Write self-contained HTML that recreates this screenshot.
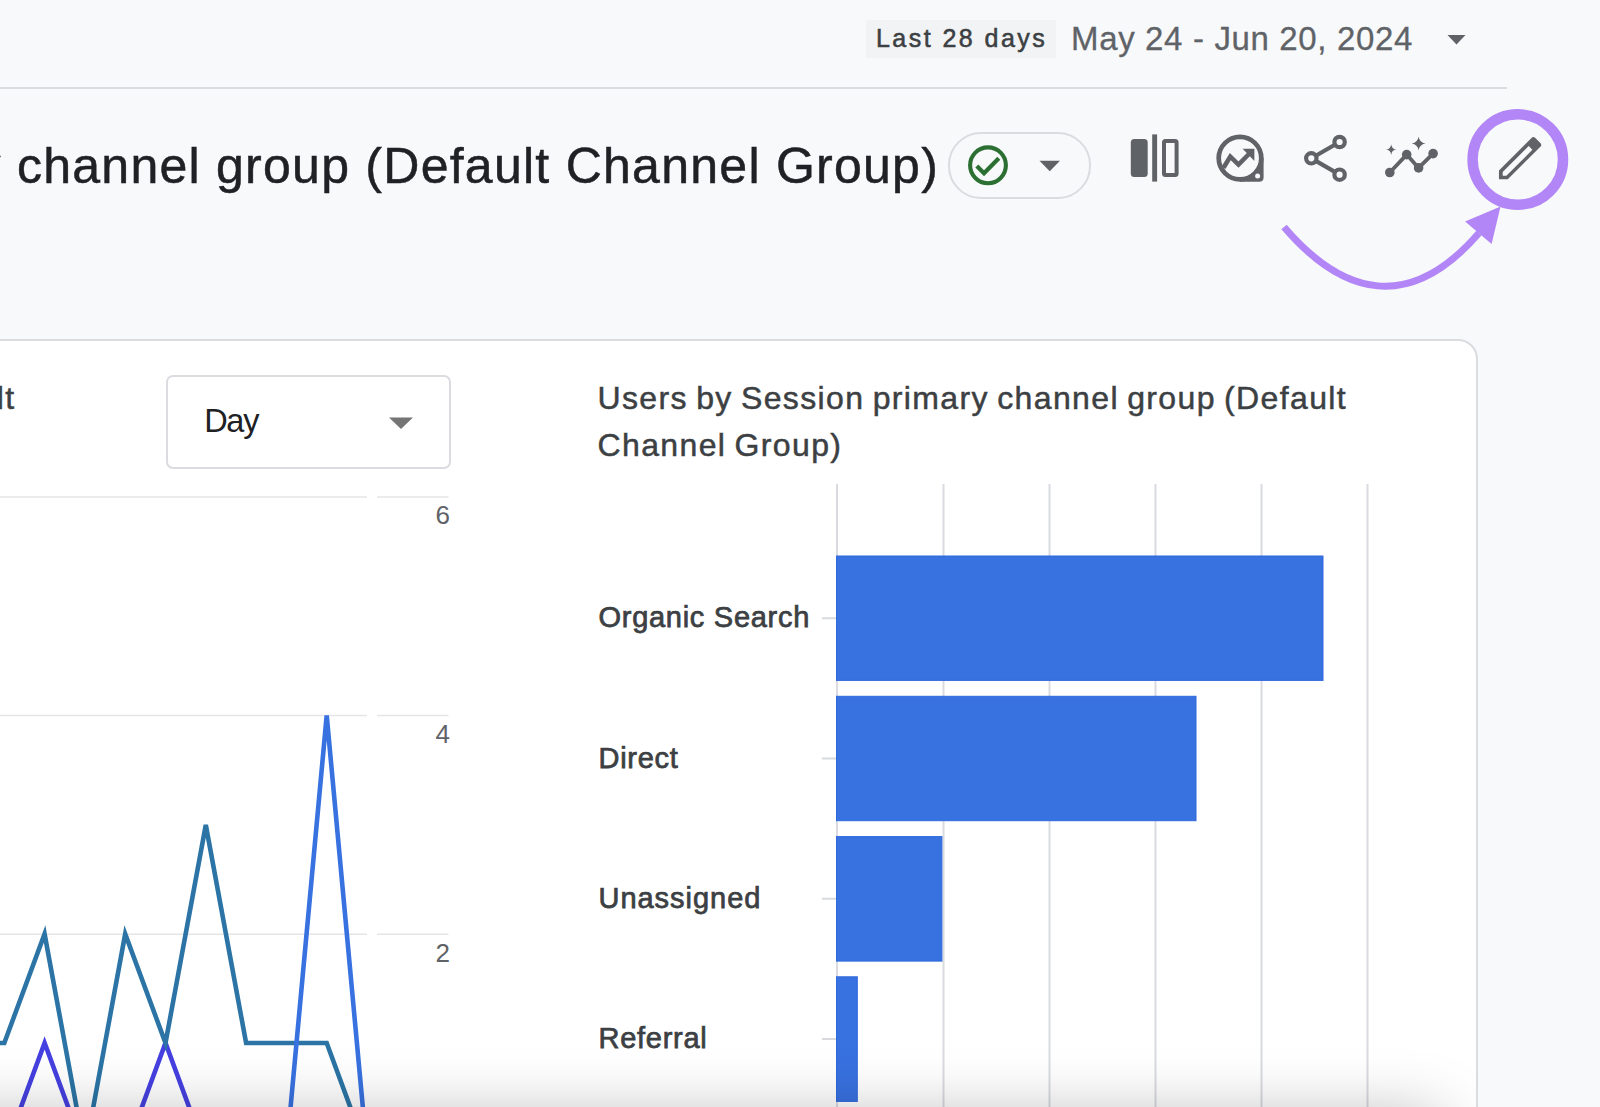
<!DOCTYPE html>
<html lang="en">
<head>
<meta charset="utf-8">
<title>Users by Session primary channel group</title>
<style>
  html, body { margin: 0; padding: 0; }
  body {
    width: 1600px; height: 1107px; overflow: hidden; position: relative;
    background: #f8f9fa;
    font-family: "Liberation Sans", sans-serif;
    color: #202124;
  }
  .abs { position: absolute; white-space: nowrap; line-height: 1; }
  /* top bar */
  #topline { position: absolute; left: 0; top: 87px; width: 1507px; height: 2px; background: #dadce0; }
  #chip28 { position: absolute; left: 866px; top: 20px; width: 190px; height: 38px; background: #f1f3f4; }
  #t28 { left: 876px; top: 26px; font-size: 25px; color: #3c4043; letter-spacing: 2.45px; -webkit-text-stroke: 0.55px #3c4043; }
  #tdate { left: 1071px; top: 21.5px; font-size: 33px; color: #5f6368; letter-spacing: 0.65px; -webkit-text-stroke: 0.3px #5f6368; }
  /* title */
  #title { left: -24.5px; top: 141px; font-size: 50px; color: #202124; letter-spacing: 1.26px; -webkit-text-stroke: 0.5px #202124; }
  #status { position: absolute; left: 948px; top: 132px; width: 138.5px; height: 62.5px; border: 2px solid #dadce0; border-radius: 33px; }
  /* card */
  #card { position: absolute; left: -30px; top: 339px; width: 1504px; height: 800px; background: #fff; border: 2px solid #dadce0; border-radius: 20px; }
  #daybox { position: absolute; left: 166px; top: 375px; width: 280.5px; height: 90px; border: 2px solid #dadce0; border-radius: 7px; background: #fff; }
  #tday { left: 204.2px; top: 405px; font-size: 32.5px; color: #202124; letter-spacing: -1.3px; }
  #tlt { right: 1584.5px; top: 374px; line-height: 48px; font-size: 32px; color: #3c4043; letter-spacing: 1.37px; -webkit-text-stroke: 0.5px #3c4043; }
  #ctitle { left: 597.5px; top: 374.5px; font-size: 32px; color: #3c4043; line-height: 47px; white-space: normal; width: 800px; letter-spacing: 1.37px; word-spacing: -2px; -webkit-text-stroke: 0.5px #3c4043; }
  .ylab { font-size: 26px; color: #5f6368; text-align: right; width: 60px; left: 390px; }
  .blab { left: 598.5px; font-size: 29px; letter-spacing: 0.72px; color: #3c4043; -webkit-text-stroke: 0.75px #3c4043; }
  #svgall { position: absolute; left: 0; top: 0; }
  #fadeclip { position: absolute; left: 0; top: 900px; width: 1476px; height: 207px; overflow: hidden; pointer-events: none; }
  #fade { position: absolute; left: -300px; top: 216px; width: 1740px; height: 300px; background: #ddd; box-shadow: 0 0 60px rgba(0,0,0,0.28); }
</style>
</head>
<body>

<div id="topline"></div>
<div id="chip28"></div>
<div class="abs" id="t28">Last 28 days</div>
<div class="abs" id="tdate">May 24 - Jun 20, 2024</div>

<div class="abs" id="title">y <span id="tt2">channel group (Default Channel Group)</span></div>
<div id="status"></div>

<div id="card"></div>
<div id="daybox"></div>
<div class="abs" id="tday">Day</div>
<div class="abs" id="tlt">Users by Session primary channel group (Default</div>
<div class="abs" id="ctitle">Users by Session primary channel group (Default Channel Group)</div>

<div class="abs ylab" style="top:502px">6</div>
<div class="abs ylab" style="top:721px">4</div>
<div class="abs ylab" style="top:940px">2</div>

<div class="abs blab" style="top:603.3px">Organic Search</div>
<div class="abs blab" style="top:744.1px">Direct</div>
<div class="abs blab" style="top:884.2px;letter-spacing:0.97px">Unassigned</div>
<div class="abs blab" style="top:1024.1px">Referral</div>

<svg id="svgall" width="1600" height="1107" viewBox="0 0 1600 1107">
  <!-- date arrow -->
  <path d="M1447.5 35 L1465.5 35 L1456.5 44.5 Z" fill="#5f6368"/>

  <!-- status chip: check + caret -->
  <circle cx="988" cy="165.3" r="17.9" fill="none" stroke="#2b7032" stroke-width="4.1"/>
  <path d="M976.8 166 L984 173.2 L998.8 158.3" fill="none" stroke="#2b7032" stroke-width="4.2"/>
  <path d="M1039.5 160.7 L1060 160.7 L1049.75 171.3 Z" fill="#5f6368"/>

  <!-- compare icon -->
  <rect x="1130.8" y="138.9" width="16.9" height="38.1" rx="3.5" fill="#5f6368"/>
  <rect x="1152.2" y="134.4" width="4.9" height="47.2" fill="#5f6368"/>
  <rect x="1164" y="140.9" width="12.6" height="34.1" rx="1.5" fill="none" stroke="#5f6368" stroke-width="4"/>

  <!-- insights icon -->
  <path d="M1240 158.1 L1263.6 158.1 L1263.6 177.3 Q1263.6 181.8 1259.1 181.8 L1240 181.8 Z" fill="#5f6368"/>
  <circle cx="1240" cy="158.1" r="21.3" fill="#f8f9fa" stroke="#5f6368" stroke-width="4.7"/>
  <path d="M1223.5 167.8 L1230.3 156.6 L1238.5 164.6 L1249 154" fill="none" stroke="#5f6368" stroke-width="4.6"/>
  <path d="M1242.6 148.8 L1254.4 148.8 L1254.4 161 Z" fill="#5f6368"/>
  <circle cx="1257.6" cy="176.1" r="2.5" fill="#f8f9fa"/>

  <!-- share icon -->
  <g fill="none" stroke="#5f6368" stroke-width="4.2">
    <circle cx="1339.6" cy="142" r="5.2"/>
    <circle cx="1311.3" cy="158.3" r="5.2"/>
    <circle cx="1339.6" cy="174.7" r="5.2"/>
    <path d="M1316.2 155.5 L1334.8 144.8 M1316.2 161.1 L1334.8 171.9"/>
  </g>

  <!-- sparkle trend icon -->
  <g fill="#5f6368">
    <circle cx="1389.8" cy="172.5" r="4.8"/>
    <circle cx="1406.7" cy="154.6" r="4.8"/>
    <circle cx="1418.6" cy="167.9" r="4.8"/>
    <circle cx="1433.1" cy="153.6" r="4.8"/>
    <path d="M1418.6 136.8 Q1419.6 142.6 1425.4 143.6 Q1419.6 144.6 1418.6 150.4 Q1417.6 144.6 1411.8 143.6 Q1417.6 142.6 1418.6 136.8 Z"/>
    <path d="M1391.2 144.2 Q1391.6 149.2 1396.6 149.6 Q1391.6 150 1391.2 155 Q1390.8 150 1385.8 149.6 Q1390.8 149.2 1391.2 144.2 Z"/>
  </g>
  <path d="M1389.8 172.5 L1406.7 154.6 L1418.6 167.9 L1433.1 153.6" fill="none" stroke="#5f6368" stroke-width="3.8" stroke-linejoin="round"/>

  <!-- pencil -->
  <g transform="translate(1491.9 130) scale(2.35)">
    <path fill="#5f6368" d="M17.66 3c-.25 0-.51.1-.7.29L3 17.25V21h3.75L20.71 7.04c.39-.39.39-1.02 0-1.41l-2.34-2.34c-.2-.2-.45-.29-.71-.29z"/>
  </g>
  <path fill="#f8f9fa" d="M1502.7 175.8 L1502.7 172.1 L1528.7 146.1 L1532.4 149.8 L1506.4 175.8 Z"/>

  <!-- purple highlight -->
  <circle cx="1517.8" cy="159.5" r="45.2" fill="none" stroke="#b286f6" stroke-width="10.5"/>
  <path d="M1284 227 C1343 296 1410 313 1479 233" fill="none" stroke="#b286f6" stroke-width="7"/>
  <path d="M1500.5 206.5 L1465.1 221.4 L1491.6 243.9 Z" fill="#b286f6"/>

  <!-- line chart gridlines -->
  <g stroke="#e5e5e5" stroke-width="1.4">
    <path d="M0 497 H367 M377 497 H448.5"/>
    <path d="M0 715.5 H367 M377 715.5 H448.5"/>
    <path d="M0 934.2 H367 M377 934.2 H448.5"/>
  </g>
  <!-- line chart series -->
  <g fill="none" stroke-width="4.6" stroke-linejoin="miter">
    <path stroke="#4540e0" d="M-36 1152.5 L4.3 1152.5 L44.6 1043 L84.9 1152.5 L125.2 1152.5 L165.5 1043 L205.8 1152.5"/>
    <path stroke="#2b74a5" d="M-36 1043 L4.3 1043 L44.6 934 L84.9 1152.5 L125.2 934 L165.5 1043 L205.8 825 L246.1 1043 L286.4 1043 L326.7 1043 L367 1152.5"/>
    <path stroke="#3871e0" d="M246.1 1152.5 L286.4 1152.5 L326.7 715.5 L367 1152.5"/>
  </g>

  <!-- bar chart gridlines -->
  <g stroke="#d9dbe1" stroke-width="2">
    <path d="M837 484 V1107 M943.5 484 V1107 M1049.5 484 V1107 M1155.5 484 V1107 M1261.5 484 V1107 M1367.5 484 V1107"/>
  </g>
  <g stroke="#d8dade" stroke-width="2.1">
    <path d="M822 618.2 H836 M822 758.5 H836 M822 898.7 H836 M822 1039 H836"/>
  </g>
  <g fill="#3871e0" stroke="#2f69dd" stroke-width="1">
    <rect x="836.5" y="556" width="486.5" height="124.4"/>
    <rect x="836.5" y="696.3" width="359.5" height="124.4"/>
    <rect x="836.5" y="836.6" width="105.4" height="124.5"/>
    <rect x="836.5" y="976.8" width="20.8" height="124.6"/>
  </g>

  <!-- day select caret -->
  <path d="M389 417.4 L413 417.4 L401 429 Z" fill="#757575"/>
</svg>

<div id="fadeclip"><div id="fade"></div></div>

</body>
</html>
